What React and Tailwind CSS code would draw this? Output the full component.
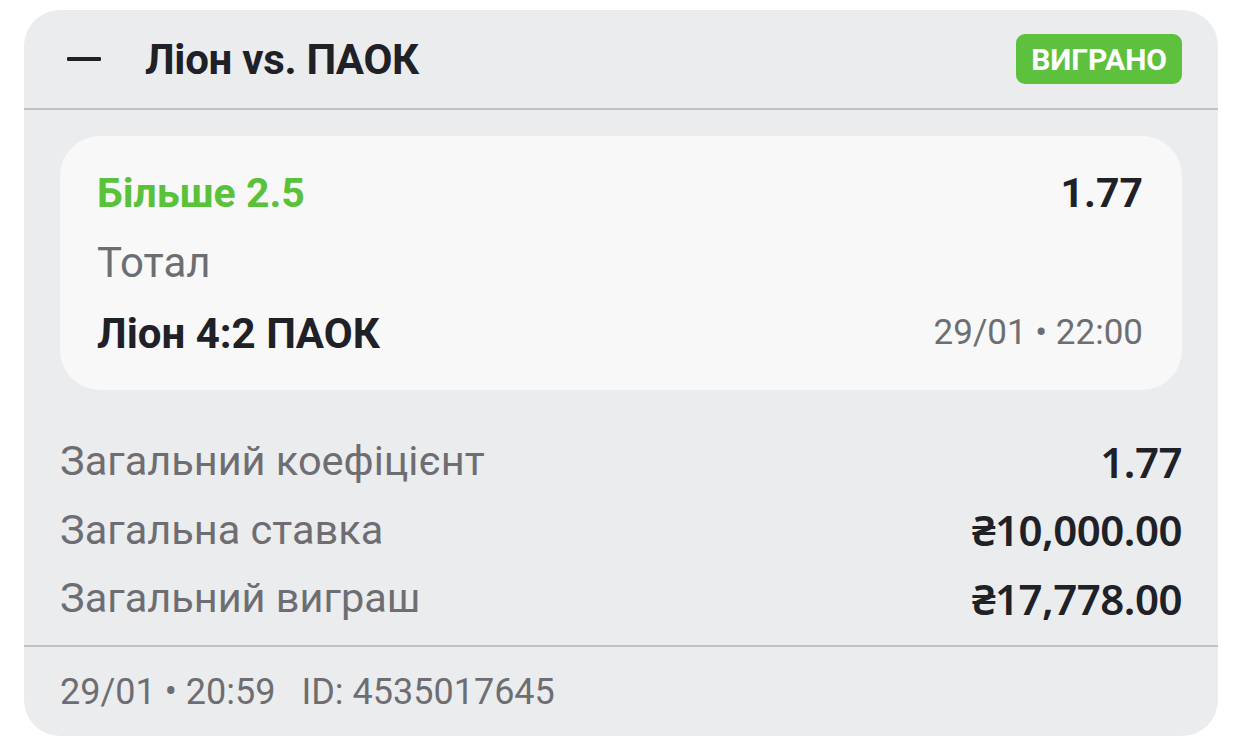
import React from 'react';

const summary = [
    { label: 'Загальний коефіцієнт', value: '1.77' },
    { label: 'Загальна ставка', value: '₴10,000.00' },
    { label: 'Загальний виграш', value: '₴17,778.00' }
];

const App = () => {
    return (
        <div className="w-[1242px] h-[747px] bg-white pt-[10px] px-[24px] font-['Roboto',sans-serif] overflow-hidden">
            <div className="w-[1194px] h-[726px] bg-[#ebecee] rounded-[36px] overflow-hidden flex flex-col">
                {/* Header */}
                <div className="h-[98px] flex items-center justify-between pl-[43px] pr-[36px] shrink-0">
                    <div className="flex items-center">
                        <div className="w-[34px] h-[4px] bg-[#202027] rounded-[1px]" />
                        <span className="ml-[44px] text-[42px] font-bold text-[#202027] tracking-[-0.3px]">Ліон vs. ПАОК</span>
                    </div>
                    <div className="h-[50px] px-[15px] rounded-[9px] bg-[#5dc13d] flex items-center">
                        <span className="text-[30px] font-bold text-white">ВИГРАНО</span>
                    </div>
                </div>
                <div className="h-[2px] bg-[#c0c1c4] shrink-0" />

                {/* Body */}
                <div className="px-[36px] pt-[26px]">
                    <div className="h-[254px] bg-[#f8f8f9] rounded-[40px] pl-[37px] pr-[39px] pt-[30px] flex flex-col">
                        <div className="h-[56px] flex items-center justify-between">
                            <span className="text-[41px] font-bold text-[#5ac13a]">Більше 2.5</span>
                            <span className="text-[41px] font-bold text-[#202027]">1.77</span>
                        </div>
                        <div className="h-[80px] flex items-center">
                            <span className="text-[42px] text-[#6e6e72]">Тотал</span>
                        </div>
                        <div className="h-[62px] flex items-center justify-between">
                            <span className="text-[42px] font-bold text-[#202027]">Ліон 4:2 ПАОК</span>
                            <span className="text-[35px] text-[#6e6e72]">29/01 • 22:00</span>
                        </div>
                    </div>

                    <div className="pt-[37px] flex flex-col">
                        {summary.map((row) => (
                            <div key={row.label} className="h-[68.5px] flex items-center justify-between">
                                <span className="text-[41.5px] text-[#6e6e72]">{row.label}</span>
                                <span className="text-[42px] font-semibold text-[#202027] font-['Noto_Sans',sans-serif] tracking-[-0.5px]">{row.value}</span>
                            </div>
                        ))}
                    </div>
                </div>

                <div className="mt-[12px] h-[2px] bg-[#c0c1c4] shrink-0" />
                <div className="flex-1 flex items-center px-[36px] pt-[2px]">
                    <span className="text-[36px] text-[#6e6e72]">29/01 • 20:59</span>
                    <span className="ml-[26px] text-[36px] text-[#6e6e72]">ID: 4535017645</span>
                </div>
            </div>
        </div>
    );
};

export default App;
